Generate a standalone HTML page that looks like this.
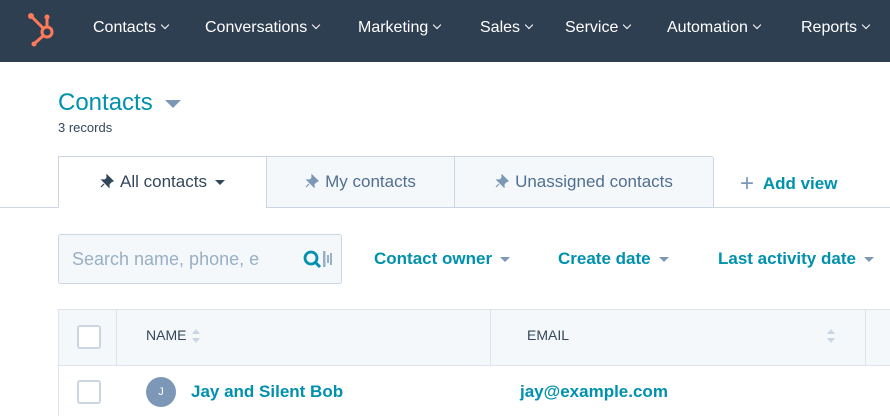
<!DOCTYPE html>
<html><head><style>
*{margin:0;padding:0;box-sizing:border-box}
body{width:890px;height:413px;overflow:hidden;background:#fff;font-family:"Liberation Sans",sans-serif;color:#33475b;position:relative}
.a{position:absolute;white-space:nowrap}
.nav{position:absolute;left:0;top:0;width:890px;height:62px;background:#2f3f52}
.nav span{position:absolute;top:19px;color:#fff;font-size:16px}
.chev{display:inline-block;width:6px;height:6px;border-right:1.3px solid #fff;border-bottom:1.3px solid #fff;transform:rotate(45deg);margin-left:6px;position:relative;top:-4px}
.tri{display:inline-block;border-left:5px solid transparent;border-right:5px solid transparent;border-top:5px solid #7c98b6;margin-left:8px;vertical-align:middle}
.tab{position:absolute;top:156px;height:52px;border:1px solid #cbd6e2;background:#f5f8fa;font-size:17px;text-align:center;line-height:50px;color:#516f90}
.teal{color:#0091ae;font-weight:bold}
.cb{position:absolute;width:24px;height:24px;border:2px solid #cbd6e2;border-radius:3px;background:#fff}
.pin{display:inline-block;vertical-align:-1px;margin-right:6px}
.sort{display:inline-block;vertical-align:middle;margin-left:6px}
</style></head><body>
<div class="nav">
<svg class="a" style="left:26px;top:11px" width="32" height="36" viewBox="0 0 32 36"><g stroke="#ff7a59" stroke-width="3" fill="none" stroke-linecap="round"><circle cx="21" cy="21" r="5"/><line x1="6" y1="6" x2="17" y2="17"/><line x1="21" y1="7" x2="21" y2="15"/><line x1="17" y1="25" x2="9" y2="32"/></g><circle cx="5" cy="5" r="3" fill="#ff7a59"/><circle cx="21" cy="6" r="2.5" fill="#ff7a59"/><circle cx="8" cy="33" r="2.5" fill="#ff7a59"/></svg>
<span style="left:93px">Contacts<i class="chev"></i></span>
<span style="left:205px">Conversations<i class="chev"></i></span>
<span style="left:358px">Marketing<i class="chev"></i></span>
<span style="left:480px">Sales<i class="chev"></i></span>
<span style="left:565px">Service<i class="chev"></i></span>
<span style="left:667px">Automation<i class="chev"></i></span>
<span style="left:801px">Reports<i class="chev"></i></span>
</div>
<div class="a" style="left:58px;top:89px;font-size:24px;color:#0091ae">Contacts<span style="display:inline-block;margin-left:12px;vertical-align:middle;border-left:8px solid transparent;border-right:8px solid transparent;border-top:8px solid #7c98b6"></span></div>
<div class="a" style="left:58px;top:120px;font-size:13px">3 records</div>
<div class="a" style="left:0;top:207px;width:890px;height:1px;background:#cbd6e2"></div>
<div class="tab" style="left:58px;width:209px;background:#fff;border-bottom-color:#fff;color:#33475b"><svg class="pin" width="14" height="14" viewBox="0 0 14 14"><path d="M7 1l6 6-2 1-2 2 0 3-7-7 3 0 2-2z M4 10l-3 3" fill="#33475b" stroke="#33475b" stroke-width="1.2"/></svg>All contacts<span class="tri" style="border-top-color:#33475b"></span></div>
<div class="tab" style="left:266px;width:189px"><svg class="pin" width="14" height="14" viewBox="0 0 14 14"><path d="M7 1l6 6-2 1-2 2 0 3-7-7 3 0 2-2z M4 10l-3 3" fill="#7c98b6" stroke="#7c98b6" stroke-width="1.2"/></svg>My contacts</div>
<div class="tab" style="left:454px;width:260px;border-radius:0 3px 0 0"><svg class="pin" width="14" height="14" viewBox="0 0 14 14"><path d="M7 1l6 6-2 1-2 2 0 3-7-7 3 0 2-2z M4 10l-3 3" fill="#7c98b6" stroke="#7c98b6" stroke-width="1.2"/></svg>Unassigned contacts</div>
<div class="a teal" style="left:740px;top:168px;font-size:17px"><span style="color:#7c98b6;font-weight:normal;font-size:24px;position:relative;top:2px">+</span>&nbsp; Add view</div>
<div class="a" style="left:58px;top:234px;width:284px;height:50px;border:1px solid #cbd6e2;border-radius:3px;background:#f5f8fa"></div>
<div class="a" style="left:72px;top:249px;font-size:18px;color:#99afc4">Search name, phone, e</div>
<svg class="a" style="left:302px;top:249px" width="36" height="22"><circle cx="9" cy="9" r="6" stroke="#0091ae" stroke-width="2.8" fill="none"/><line x1="13" y1="13" x2="18" y2="18" stroke="#0091ae" stroke-width="3"/><rect x="21" y="2" width="2.5" height="16" fill="#99afc4"/><rect x="25" y="6" width="2" height="8" fill="#99afc4"/><rect x="28" y="4" width="2" height="12" fill="#99afc4"/></svg>
<div class="a teal" style="left:374px;top:249px;font-size:17px">Contact owner<span class="tri"></span></div>
<div class="a teal" style="left:558px;top:249px;font-size:17px">Create date<span class="tri"></span></div>
<div class="a teal" style="left:718px;top:249px;font-size:17px">Last activity date<span class="tri"></span></div>
<div class="a" style="left:58px;top:309px;width:832px;height:57px;background:#f5f8fa;border:1px solid #dfe3eb;border-right:none"></div>
<div class="a" style="left:116px;top:309px;width:1px;height:57px;background:#dfe3eb"></div>
<div class="a" style="left:490px;top:309px;width:1px;height:57px;background:#dfe3eb"></div>
<div class="a" style="left:865px;top:309px;width:1px;height:57px;background:#dfe3eb"></div>
<div class="a" style="left:58px;top:366px;width:1px;height:50px;background:#dfe3eb"></div>
<div class="cb" style="left:77px;top:325px"></div>
<div class="a" style="left:146px;top:327px;font-size:14px">NAME<svg class="sort" width="8" height="18"><path d="M0 7l4-5 4 5z M0 11l4 5 4-5z" fill="#cbd6e2"/></svg></div>
<div class="a" style="left:527px;top:327px;font-size:14px">EMAIL</div>
<svg class="a" style="left:827px;top:327px" width="8" height="18"><path d="M0 7l4-5 4 5z M0 11l4 5 4-5z" fill="#cbd6e2"/></svg>
<div class="cb" style="left:77px;top:380px"></div>
<div class="a" style="left:146px;top:377px;width:30px;height:30px;border-radius:50%;background:#7c98b6;color:#fff;font-size:11px;text-align:center;line-height:30px">J</div>
<div class="a teal" style="left:191px;top:382px;font-size:17px">Jay and Silent Bob</div>
<div class="a teal" style="left:520px;top:382px;font-size:17px">jay@example.com</div>
</body></html>
